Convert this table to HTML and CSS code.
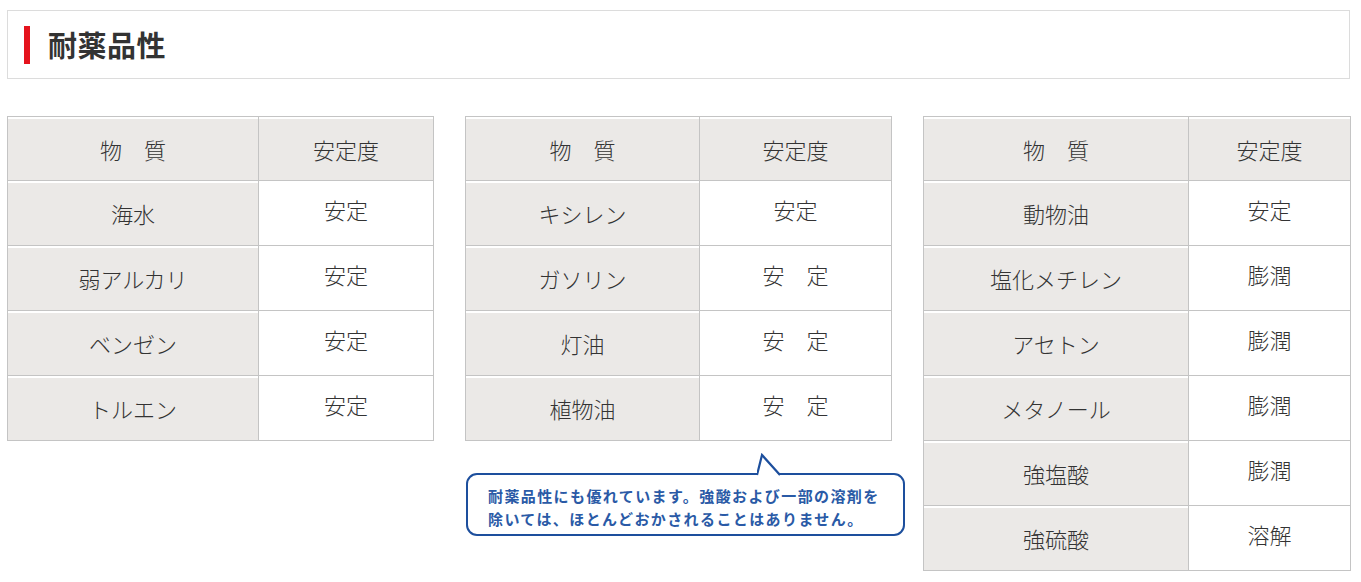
FILE: index.html
```html
<!DOCTYPE html>
<html lang="ja">
<head>
<meta charset="utf-8">
<title>耐薬品性</title>
<link rel="stylesheet" href="styles.css">
</head>
<body>
<div class="page">
  <div class="title-box">
    <span class="title-bar"></span>
    <h2 class="title">耐薬品性</h2>
  </div>
  <div class="tables">
    <div class="col">
      <table class="chem t1">
        <tr><th class="hd">物　質</th><th class="hd">安定度</th></tr>
        <tr><th>海水</th><td>安定</td></tr>
        <tr><th>弱アルカリ</th><td>安定</td></tr>
        <tr><th>ベンゼン</th><td>安定</td></tr>
        <tr><th>トルエン</th><td>安定</td></tr>
      </table>
    </div>
    <div class="col">
      <table class="chem t2">
        <tr><th class="hd">物　質</th><th class="hd">安定度</th></tr>
        <tr><th>キシレン</th><td>安定</td></tr>
        <tr><th>ガソリン</th><td>安　定</td></tr>
        <tr><th>灯油</th><td>安　定</td></tr>
        <tr><th>植物油</th><td>安　定</td></tr>
      </table>
      <div class="bubble">
        <svg class="bubble-tip" width="30" height="24" viewBox="0 0 30 24">
          <polygon points="0,23 5,2 23,23" fill="#fff"/>
          <polyline points="0,22 5,2 23,22" fill="none" stroke="#1d4f9d" stroke-width="2.2" stroke-linejoin="miter"/>
        </svg>
        <p class="bubble-text">耐薬品性にも優れています。強酸および一部の溶剤を<br>除いては、ほとんどおかされることはありません。</p>
      </div>
    </div>
    <div class="col">
      <table class="chem t3">
        <tr><th class="hd">物　質</th><th class="hd">安定度</th></tr>
        <tr><th>動物油</th><td>安定</td></tr>
        <tr><th>塩化メチレン</th><td>膨潤</td></tr>
        <tr><th>アセトン</th><td>膨潤</td></tr>
        <tr><th>メタノール</th><td>膨潤</td></tr>
        <tr><th>強塩酸</th><td>膨潤</td></tr>
        <tr><th>強硫酸</th><td>溶解</td></tr>
      </table>
    </div>
  </div>
</div>
</body>
</html>
```

FILE: styles.css
```css
html, body {
  margin: 0;
  padding: 0;
  background: #fff;
}
body {
  font-family: "Noto Sans CJK JP", "Noto Sans", sans-serif;
  color: #333;
}
.page {
  padding: 10px 11px 0 7px;
}
.title-box {
  display: flex;
  align-items: center;
  height: 67px;
  border: 1px solid #dcdcdc;
  padding-left: 16px;
}
.title-bar {
  display: block;
  width: 6px;
  height: 38px;
  background: #e5131d;
  margin-right: 18px;
}
.title {
  margin: 0;
  font-size: 29px;
  font-weight: 700;
  color: #333;
  letter-spacing: 0.5px;
  line-height: 1;
}
.tables {
  display: grid;
  grid-template-columns: 427px 427px 428px;
  column-gap: 31px;
  align-items: start;
  margin-top: 37px;
}
.col {
  display: flex;
  flex-direction: column;
}
.chem {
  border-collapse: collapse;
  width: 100%;
  font-size: 22px;
}
.chem th, .chem td {
  border: 1px solid #c4c4c4;
  height: 65px;
  padding: 0;
  text-align: center;
  font-weight: 300;
  color: #333;
  box-sizing: border-box;
}
.chem tr:first-child th {
  height: 64px;
}
.chem th {
  background: #ebe9e7;
  box-shadow: inset 0 2px 0 #fff;
  padding-top: 0;
}
.chem th.hd {
  padding-top: 0;
}
.chem td {
  background: #fff;
  padding-bottom: 8px;
}
.t1 th:first-child { width: 251px; }
.t2 th:first-child { width: 234px; }
.t3 th:first-child { width: 265px; }

.bubble {
  position: relative;
  margin-top: 32px;
  margin-left: 1px;
  width: 439px;
  box-sizing: border-box;
  height: 63px;
  border: 2px solid #1d4f9d;
  border-radius: 11px;
  background: #fff;
  padding: 9px 0 0 20px;
}
.bubble-tip {
  position: absolute;
  left: 289px;
  top: -22px;
}
.bubble-text {
  margin: 0;
  font-size: 15px;
  font-weight: 700;
  letter-spacing: 1.4px;
  line-height: 23px;
  color: #2a5aa6;
  white-space: nowrap;
}
```
